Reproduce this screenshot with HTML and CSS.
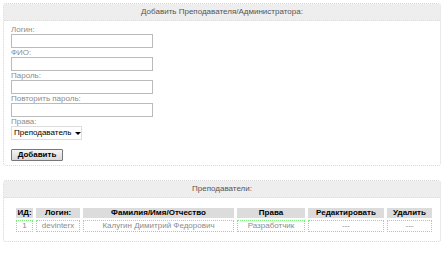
FILE: index.html
```html
<!DOCTYPE html>
<html lang="ru">
  <head>
    <meta charset="UTF-8" />
    <title>Преподаватели</title>
    <link rel="stylesheet" href="styles.css">
  </head>
  <body>
    <div class="panel">
      <div class="panel-head">Добавить Преподавателя/Администратора:</div>
      <form class="panel-body form">
        <label>Логин:</label>
        <input type="text" />
        <label>ФИО:</label>
        <input type="text" />
        <label>Пароль:</label>
        <input type="password" />
        <label>Повторить пароль:</label>
        <input type="password" />
        <label>Права:</label>
        <div class="select">Преподаватель <span class="arrow"></span></div>
        <button type="button" class="btn">Добавить</button>
      </form>
    </div>

    <div class="panel">
      <div class="panel-head">Преподаватели:</div>
      <div class="panel-body">
        <table class="list">
          <tr>
            <th class="c-id">ИД:</th>
            <th class="c-login">Логин:</th>
            <th class="c-fio">Фамилия/Имя/Отчество</th>
            <th class="c-role">Права</th>
            <th class="c-edit">Редактировать</th>
            <th class="c-del">Удалить</th>
          </tr>
          <tr>
            <td>1</td>
            <td>devinterx</td>
            <td>Калугин Димитрий Федорович</td>
            <td>Разработчик</td>
            <td>---</td>
            <td>---</td>
          </tr>
        </table>
      </div>
    </div>
  </body>
</html>
```
FILE: styles.css
```css
body,
html {
  margin: 0;
  padding: 0;
  background-color: #ffffff;
  font-family: "Liberation Sans", Arial, sans-serif;
  font-size: 8px;
  color: #8c8c8c;
}
body {
  padding: 3px 1px 0 3px;
}
.panel {
  border: 1px dotted #d4d4d4;
  border-radius: 3px;
  margin-bottom: 14px;
  background-color: #ffffff;
}
.panel-head {
  height: 16px;
  line-height: 16px;
  text-align: center;
  color: #555555;
  background-color: #eeeeee;
  border-bottom: 1px dotted #dddddd;
}
.form {
  display: flex;
  flex-direction: column;
  align-items: flex-start;
  padding: 4px 8px 4px 7px;
}
.form label {
  line-height: 9px;
  height: 9px;
}
.form input {
  width: 142px;
  height: 14px;
  box-sizing: border-box;
  border: 1px solid #bbbbbb;
  margin: 0;
  padding: 0 2px;
  font-size: 8px;
}
.select {
  width: 71px;
  height: 14px;
  box-sizing: border-box;
  border: 1px solid #dddddd;
  line-height: 12px;
  padding-left: 2px;
  color: #000000;
  display: flex;
  align-items: center;
  gap: 4px;
}
.arrow {
  width: 0;
  height: 0;
  border-left: 3px solid transparent;
  border-right: 3px solid transparent;
  border-top: 3px solid #000000;
}
.btn {
  margin-top: 9px;
  width: 52px;
  height: 12px;
  padding: 0;
  font-family: "Liberation Sans", Arial, sans-serif;
  font-size: 8px;
  font-weight: bold;
  color: #000000;
  border: 1px solid #777777;
  border-radius: 1px;
  background: linear-gradient(#f4f4f4, #d8d8d8);
  line-height: 10px;
}
.list {
  margin: 8px 0 7px 9px;
  border-spacing: 3px 2px;
}
.list th {
  background-color: #dcdcdc;
  color: #000000;
  font-weight: bold;
  height: 10px;
  line-height: 10px;
  padding: 0;
}
.list td {
  border: 1px dotted #77ee77;
  text-align: center;
  height: 10px;
  line-height: 10px;
  padding: 0;
}
.c-id { width: 17px; }
.c-login { width: 44px; }
.c-fio { width: 151px; }
.c-role { width: 68px; }
.c-edit { width: 76px; }
.c-del { width: 45px; }
```
